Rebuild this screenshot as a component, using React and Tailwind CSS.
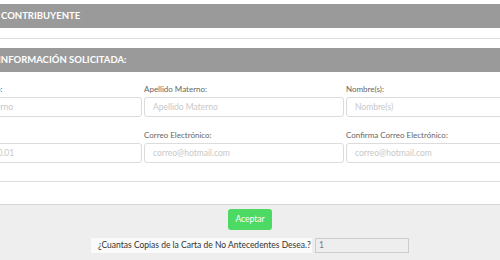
const fields = [
  { label: 'Apellido Paterno:', ph: 'Apellido Paterno' },
  { label: 'Apellido Materno:', ph: 'Apellido Materno' },
  { label: 'Nombre(s):', ph: 'Nombre(s)' },
  { label: 'RFC:', ph: '000000.0000.01' },
  { label: 'Correo Electrónico:', ph: 'correo@hotmail.com' },
  { label: 'Confirma Correo Electrónico:', ph: 'correo@hotmail.com' },
];

function Field({ label, ph }) {
  return (
    <div className="flex flex-col">
      <label className="h-[12px] leading-[12px] text-[8px] text-[#666] whitespace-nowrap">{label}</label>
      <input
        readOnly
        placeholder={ph}
        className="mt-[2px] h-[20px] w-full border border-[#dcdcdc] rounded-[3px] px-[8px] text-[8.5px] bg-white outline-none placeholder:text-[#c8c8c8]"
      />
    </div>
  );
}

export default function App() {
  return (
    <div className="w-[500px] h-[260px] overflow-hidden bg-white font-['Lato',sans-serif]">
      {/* Contribuyente */}
      <div className="pt-[4px]">
        <div className="h-[24px] bg-[#9a9a9a] flex items-center pl-px text-white font-bold text-[9.5px] whitespace-nowrap">
          CONTRIBUYENTE
        </div>
      </div>
      <div className="h-[10px]" />
      <div className="border-t border-[#dddddd]" />
      <div className="h-[9px]" />

      {/* Informacion solicitada */}
      <div className="h-[24px] bg-[#9a9a9a] flex items-center text-white font-bold text-[9.5px] whitespace-nowrap overflow-hidden">
        <span className="-ml-[2px]">INFORMACIÓN SOLICITADA:</span>
      </div>

      <div className="pt-[11px] -ml-[58px] grid grid-cols-[200px_200px_200px] gap-x-[2px] gap-y-[12px]">
        {fields.map((f) => (
          <Field key={f.label} {...f} />
        ))}
      </div>

      <div className="mt-[18px] border-t border-[#dddddd] h-[23px]" />

      {/* Acciones */}
      <div className="border-t border-[#d6d6d6] bg-[#eeeeee] h-[60px] flex flex-col items-center pt-[4px]">
        <button className="h-[21px] w-[44px] rounded-[3px] bg-[#4cd964] text-white text-[8.5px]">
          Aceptar
        </button>
        <div className="mt-[8px] flex items-center gap-[3px]">
          <div className="h-[15px] w-[221px] bg-[#fafafa] flex items-center px-[7px] text-[8.5px] text-[#333] whitespace-nowrap">
            ¿Cuantas Copias de la Carta de No Antecedentes Desea.?
          </div>
          <div className="h-[15px] w-[94px] bg-[#eeeeee] border border-[#cccccc] flex items-center px-[3px] text-[8.5px] text-[#777]">
            1
          </div>
        </div>
      </div>
    </div>
  );
}
